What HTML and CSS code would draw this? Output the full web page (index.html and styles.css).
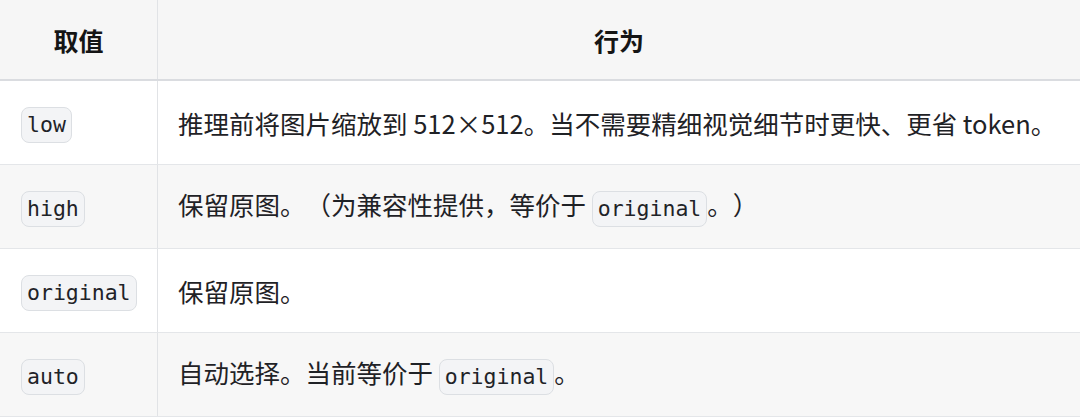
FILE: index.html
```html
<!DOCTYPE html>
<html lang="zh-CN">
<head>
<meta charset="utf-8">
<link rel="stylesheet" href="styles.css">
</head>
<body>
<table class="tbl">
  <thead>
    <tr class="head">
      <th class="c1">取值</th>
      <th class="c2">行为</th>
    </tr>
  </thead>
  <tbody>
    <tr class="row">
      <td class="c1"><code class="pill">low</code></td>
      <td class="c2">推理前将图片缩放到 512×512。当不需要精细视觉细节时更快、更省 token。</td>
    </tr>
    <tr class="row alt">
      <td class="c1"><code class="pill">high</code></td>
      <td class="c2">保留原图。（为兼容性提供，等价于 <code class="pill">original</code>。）</td>
    </tr>
    <tr class="row">
      <td class="c1"><code class="pill">original</code></td>
      <td class="c2">保留原图。</td>
    </tr>
    <tr class="row alt">
      <td class="c1"><code class="pill">auto</code></td>
      <td class="c2">自动选择。当前等价于 <code class="pill">original</code>。</td>
    </tr>
  </tbody>
</table>
</body>
</html>
```
FILE: styles.css
```css
html, body {
  margin: 0;
  padding: 0;
  background: #ffffff;
}
body {
  font-family: "Noto Sans CJK SC", "Noto Sans", sans-serif;
  color: #1f2226;
  width: 1080px;
  height: 418px;
  overflow: hidden;
  text-spacing-trim: space-all;
}
.tbl {
  border-collapse: collapse;
  width: 1080px;
  table-layout: fixed;
}
.tbl th, .tbl td {
  padding: 0;
  border-right: 1px solid #e1e3e6;
}
.tbl .c1 { width: 157px; }
.tbl .c2 { border-right: none; }
.head th {
  height: 79px;
  background: #f6f6f6;
  font-size: 25px;
  font-weight: 700;
  text-align: center;
  color: #151515;
  border-bottom: 2px solid #dadce0;
}
.row td {
  height: 83px;
  border-bottom: 1px solid #e4e6e9;
  font-size: 25.5px;
  line-height: 36px;
  vertical-align: middle;
  background: #ffffff;
}
.row.alt td { background: #f7f7f7; }
.row td.c1 { padding-left: 21px; }
.row td.c2 { padding-left: 20px; white-space: nowrap; }
.pill {
  display: inline-block;
  font-family: "DejaVu Sans Mono", "Liberation Mono", monospace;
  font-size: 21.5px;
  line-height: 34px;
  padding: 0 5px;
  background: #f3f4f6;
  border: 1.5px solid #dcdfe3;
  border-radius: 8px;
  color: #1f2328;
  vertical-align: middle;
}
```
